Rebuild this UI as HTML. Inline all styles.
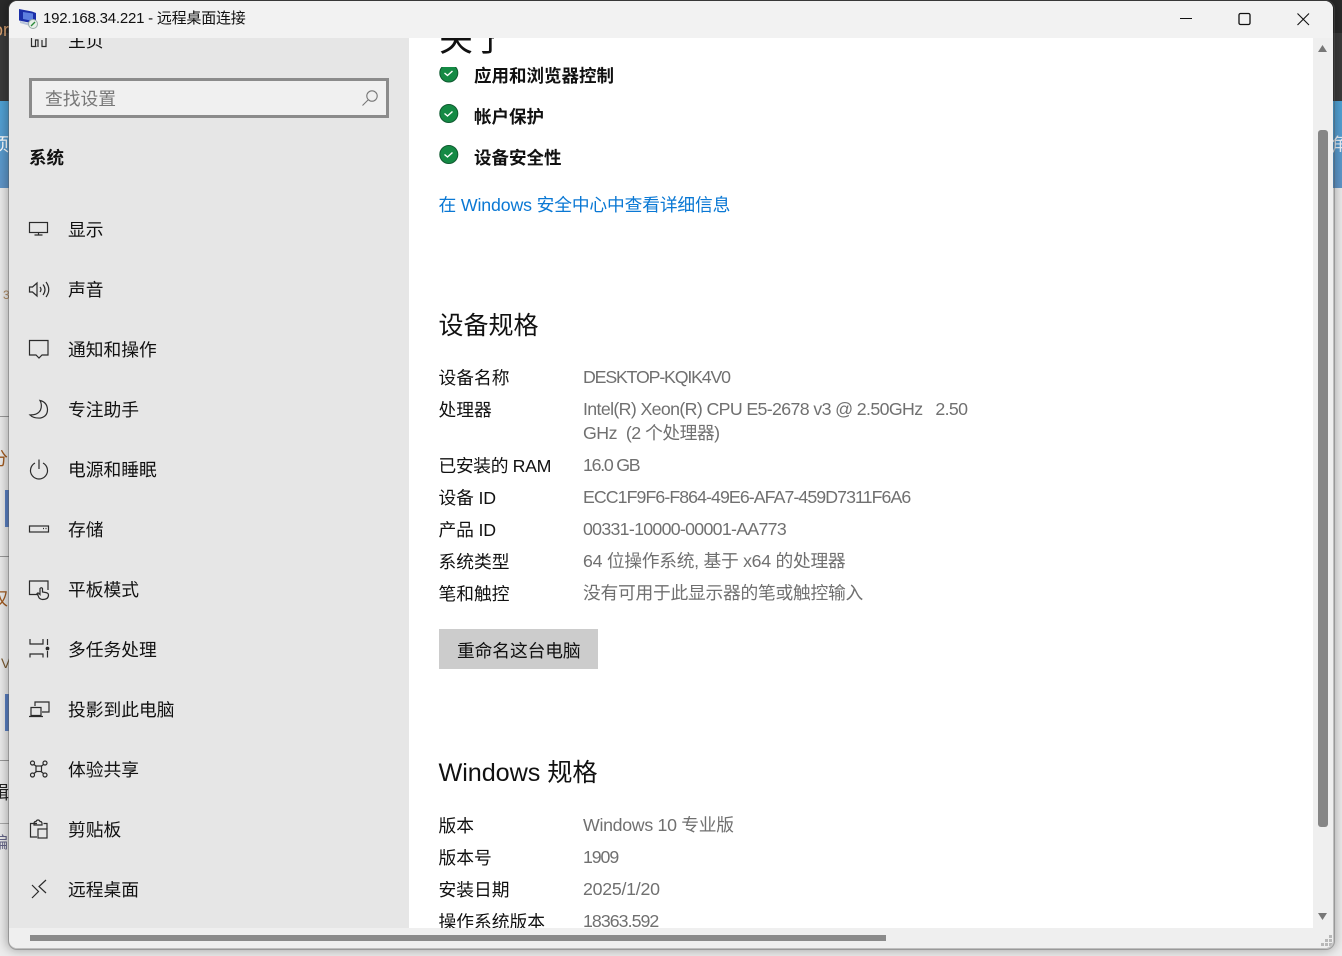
<!DOCTYPE html>
<html lang="zh-CN"><head><meta charset="utf-8"><title>关于</title>
<style>
html,body{margin:0;padding:0;width:1342px;height:956px;overflow:hidden;background:#e4e4e4}
body{position:relative;font-family:"Liberation Sans","Noto Sans CJK SC",sans-serif}
.a{position:absolute}
.t{position:absolute;white-space:nowrap;line-height:24px;height:24px;font-size:17.75px;color:#111;font-weight:400}
.v{color:#707070}
.n{left:68px}
.l{left:438.500px}
.r{left:583px}
.b{left:474px;font-weight:700;font-size:17.5px;color:#111}
svg{position:absolute;overflow:visible}
.i{fill:none;stroke:#2b2b2b;stroke-width:1.2}
#win{position:absolute;left:0;top:0;width:1342px;height:956px;clip-path:inset(1px 9px 8px 9px round 8px);background:#efefef}
</style></head><body>
<!-- background desktop -->
<div class="a" style="left:0;top:0;width:1342px;height:33px;background:#2a2a2a"></div>
<div class="a" style="left:0;top:33px;width:1342px;height:68px;background:#3a3a3a"></div>
<div class="a" style="left:0;top:101px;width:1342px;height:87px;background:linear-gradient(#4fa3d6,#6095c8)"></div>
<div class="a" style="left:0;top:188px;width:1342px;height:768px;background:#ececec"></div>
<div class="a" style="left:0;top:416px;width:9px;height:1px;background:#999"></div>
<div class="a" style="left:0;top:556px;width:9px;height:1px;background:#999"></div>
<div class="a" style="left:0;top:760px;width:9px;height:1px;background:#999"></div>
<div class="a" style="left:0;top:823px;width:9px;height:1px;background:#aaa"></div>
<div class="a" style="left:5px;top:490px;width:4px;height:37px;background:#5a80c4"></div>
<div class="a" style="left:5px;top:694px;width:4px;height:37px;background:#5a80c4"></div>
<div class="t" style="left:-7px;top:18px;color:#d8a070;font-size:18px">or</div>
<div class="t" style="left:-9px;top:133px;color:#fff;font-size:18px">项</div>
<div class="t" style="left:1331px;top:133px;color:#e8f0f8;font-size:18px">角</div>
<div class="t" style="left:3px;top:283px;color:#b08a60;font-size:12px">3</div>
<div class="t" style="left:-10px;top:447px;color:#a05a20;font-size:18px">分</div>
<div class="t" style="left:-10px;top:587px;color:#a05a20;font-size:18px">权</div>
<div class="t" style="left:1px;top:651px;color:#7a5a30;font-size:14px">V</div>
<div class="t" style="left:-9px;top:781px;color:#222;font-size:18px">辑</div>
<div class="t" style="left:-8px;top:832px;color:#668;font-size:16px">编</div>
<!-- window shadow -->
<div class="a" style="left:9px;top:1px;width:1324px;height:947px;border-radius:8px;box-shadow:0 0 10px 3px rgba(0,0,0,.28)"></div>
<div id="win">
<!-- sidebar & content -->
<div class="a" style="left:9px;top:38px;width:400px;height:890px;background:#e6e6e6"></div>
<div class="a" style="left:409px;top:38px;width:904px;height:890px;background:#fff"></div>
<!-- content, clipped -->
<div class="a" style="left:0;top:0;width:1342px;height:928px;overflow:hidden">
<div class="t" style="left:68px;top:29px;">主页</div>
<svg style="left:0;top:0" width="60" height="60"><path class="i" d="M31.5 47V38M35.5 47V40h2.500v7M42 47v-7M46 47V38M31.5 46.500h5M41.500 46.500h5"/></svg>
<div class="a" style="left:29px;top:78px;width:354px;height:34px;border:3px solid #8b8b8b;background:#f0f0f0"></div>
<div class="t v" style="left:45px;top:87px;color:#777">查找设置</div>
<svg style="left:0;top:0" width="400" height="120"><circle cx="372" cy="96" r="5.200" fill="none" stroke="#777" stroke-width="1.100"/><path d="M368 100l-5.500 5.500" stroke="#777" stroke-width="1.100"/></svg>
<div class="t" style="left:29px;top:146px;font-weight:700;font-size:17.500px">系统</div>

<div class="t n" style="top:218px">显示</div>
<div class="t n" style="top:278px">声音</div>
<div class="t n" style="top:338px">通知和操作</div>
<div class="t n" style="top:398px">专注助手</div>
<div class="t n" style="top:458px">电源和睡眠</div>
<div class="t n" style="top:518px">存储</div>
<div class="t n" style="top:578px">平板模式</div>
<div class="t n" style="top:638px">多任务处理</div>
<div class="t n" style="top:698px">投影到此电脑</div>
<div class="t n" style="top:758px">体验共享</div>
<div class="t n" style="top:818px">剪贴板</div>
<div class="t n" style="top:878px">远程桌面</div>

<svg style="left:0;top:0" width="60" height="928">
<g class="i">
<rect x="29.500" y="222.500" width="18" height="10"/><path d="M38.500 232.500v2.500M34.500 235h8"/>
<path d="M29.500 287v5h3l4.500 4v-13l-4.500 4zM40 287q2 2.500 0 5M43 284.500q4 5 0 10.500M46 282q5.500 7.500 0 15"/>
<path d="M29.500 340.500h18.500v14.500h-6l-3 3-3-3h-6.500z"/>
<path d="M40 400.500q7 1.500 7.500 9 0 7-7 8.500-7 .5-10.500-3 8 0 10.500-5 2-5-.5-9.500z"/>
<path d="M39 459.500v9.500M35 463a8.500 8.500 0 1 0 8 0"/>
<rect x="29.500" y="526" width="19" height="6"/><path d="M43 528.500h1M45.500 528.500h1"/>
<path d="M48 590v-9H29.500v13.500h9"/><path d="M42.500 599.500q-3.500-.5-4-3l-1.500-3q1-1 2 0l1 1v-6q1.500-1.500 2.500 0v3.500l3 .5q3 .5 3 2.500 0 4.500-6 4.500z"/>
<path d="M30 639v5h13v-5M30 657.500V654h13v3.500M47.500 639v6M47.500 651v6.500"/>
<circle cx="47.500" cy="648.500" r="1.300" fill="#2b2b2b"/>
<path d="M35 706v-4h14v10h-7"/><path d="M31 707.500h10v8H31zM29 716.500h14"/>
<circle cx="32.500" cy="763" r="2"/><circle cx="45" cy="763" r="2"/><circle cx="32.500" cy="775" r="2"/><circle cx="45" cy="775" r="2"/><rect x="36" y="766" width="5.500" height="5.500"/><path d="M34 764.500l2.500 2M43.500 764.500l-2.500 2M34 773.500l2.500-2M43.500 773.500l-2.500-2"/>
<path d="M37 823.500h-6.500v13.500h6.500M47 829v-5.500h-3.500M34 823.500q0-2 2-2 .5-1.500 2-1.500t2 1.500q2 0 2 2v1.500h-8z"/><rect x="38" y="829" width="9" height="9"/>
<path d="M32 885l6.500 6.500-6.500 6.500M46 880l-7 6.500 7 6.500"/>
</g></svg>

<!-- right pane -->
<div class="t" style="left:439px;top:22px;font-size:34px;line-height:36px;height:36px;font-weight:400">关于</div>
<div class="a" style="left:473px;top:38px;width:16px;height:10px;background:#fff"></div>
<div class="a" style="left:494px;top:38px;width:20px;height:18px;background:#fff"></div>
<div class="a" style="left:410px;top:55px;width:300px;height:12px;background:#fff"></div>
<svg style="left:0;top:0" width="460" height="170">
<defs><clipPath id="c1"><rect x="430" y="67" width="40" height="30"/></clipPath></defs>
<g clip-path="url(#c1)"><circle cx="448.800" cy="73" r="9" fill="#148a44" stroke="#0f5a30"/><path d="M444.500 73l3 2.500 5-4.500" fill="none" stroke="#fff" stroke-width="1.400"/></g>
<circle cx="448.800" cy="113.500" r="9" fill="#148a44" stroke="#0f5a30"/><path d="M444.500 113.500l3 2.500 5-4.500" fill="none" stroke="#fff" stroke-width="1.400"/>
<circle cx="448.800" cy="154.500" r="9" fill="#148a44" stroke="#0f5a30"/><path d="M444.500 154.500l3 2.500 5-4.500" fill="none" stroke="#fff" stroke-width="1.400"/>
</svg>
<div class="t b" style="top:64px">应用和浏览器控制</div>
<div class="t b" style="top:105px">帐户保护</div>
<div class="t b" style="top:146px">设备安全性</div>
<div class="t l" style="top:193px;color:#0a78d4;letter-spacing:-.15px">在 Windows 安全中心中查看详细信息</div>

<div class="t l" style="top:314px;font-size:25px">设备规格</div>
<div class="t l" style="top:366px">设备名称</div>
<div class="t l" style="top:398px">处理器</div>
<div class="t l" style="top:454px;letter-spacing:-.35px">已安装的 RAM</div>
<div class="t l" style="top:486px;letter-spacing:-.15px">设备 ID</div>
<div class="t l" style="top:518px;letter-spacing:-.15px">产品 ID</div>
<div class="t l" style="top:550px">系统类型</div>
<div class="t l" style="top:582px">笔和触控</div>
<div class="t r v" style="top:365px;letter-spacing:-1.170px">DESKTOP-KQIK4V0</div>
<div class="t r v" style="top:397px;letter-spacing:-.63px;white-space:pre">Intel(R) Xeon(R) CPU E5-2678 v3 @ 2.50GHz   2.50</div>
<div class="t r v" style="top:421px;letter-spacing:-.5px;white-space:pre">GHz  (2 个处理器)</div>
<div class="t r v" style="top:453px;letter-spacing:-1.250px">16.0 GB</div>
<div class="t r v" style="top:485px;letter-spacing:-.93px">ECC1F9F6-F864-49E6-AFA7-459D7311F6A6</div>
<div class="t r v" style="top:517px;letter-spacing:-.7px">00331-10000-00001-AA773</div>
<div class="t r v" style="top:549px;letter-spacing:-.28px">64 位操作系统, 基于 x64 的处理器</div>
<div class="t r v" style="top:581px;letter-spacing:-.25px">没有可用于此显示器的笔或触控输入</div>
<div class="a" style="left:439px;top:629px;width:159px;height:40px;background:#ccc"></div>
<div class="t" style="left:457px;top:639px;letter-spacing:-.1px">重命名这台电脑</div>
<div class="t l" style="top:761px;font-size:25.200px;letter-spacing:-.05px">Windows 规格</div>
<div class="t l" style="top:814px">版本</div>
<div class="t l" style="top:846px">版本号</div>
<div class="t l" style="top:878px">安装日期</div>
<div class="t l" style="top:910px">操作系统版本</div>
<div class="t r v" style="top:813px;letter-spacing:-.3px">Windows 10 专业版</div>
<div class="t r v" style="top:845px;letter-spacing:-1.100px">1909</div>
<div class="t r v" style="top:877px;letter-spacing:-.25px">2025/1/20</div>
<div class="t r v" style="top:909px;letter-spacing:-.95px">18363.592</div>
</div>
<!-- title bar -->
<div class="a" style="left:9px;top:1px;width:1324px;height:37px;background:#f2f2f2"></div>
<svg style="left:0;top:0" width="50" height="40">
<path d="M19 9l13 2.500 4 1.500v11l-17-3.500z" fill="#1b2fa8"/><path d="M23 12l10 1.500v7.500l-10-2z" fill="#5d7fe0"/><path d="M20 21l12 3 3 1.500-3 1-12-3.500z" fill="#b7c4da"/><circle cx="33" cy="24" r="4.500" fill="#e8efe8" stroke="#9aa"/><path d="M31 26l4-4" stroke="#2a8a3a" stroke-width="1.300"/>
</svg>
<div class="t" style="left:43px;top:7px;font-size:15px;font-weight:400;letter-spacing:-.22px;color:#111">192.168.34.221 - 远程桌面连接</div>
<svg style="left:1170px;top:0" width="160" height="38" fill="none" stroke="#111">
<path d="M10 18.500h12" stroke-width="1"/>
<rect x="69" y="13.500" width="11" height="11" rx="1.500" stroke-width="1.300"/>
<path d="M127.500 13.500l11.500 11.500M139 13.500l-11.500 11.500" stroke-width="1.100"/>
</svg>
<!-- scrollbars -->
<svg style="left:1313px;top:38px" width="20" height="20"><path d="M9.500 7l4.500 7H5z" fill="#777"/></svg>
<div class="a" style="left:1318px;top:130px;width:10px;height:697px;background:#868686;border-radius:3px"></div>
<svg style="left:1313px;top:908px" width="20" height="20"><path d="M5 5h9l-4.500 7z" fill="#777"/></svg>
<div class="a" style="left:30px;top:935px;width:856px;height:6px;background:#8a8a8a"></div>
<svg style="left:1318px;top:932px" width="16" height="16" fill="#b8b8b8"><rect x="11" y="3" width="3" height="3"/><rect x="7" y="7" width="3" height="3"/><rect x="11" y="7" width="3" height="3"/><rect x="3" y="11" width="3" height="3"/><rect x="7" y="11" width="3" height="3"/><rect x="11" y="11" width="3" height="3"/></svg>
</div>
<!-- window edge -->
<div class="a" style="left:8px;top:0;width:1325px;height:948px;box-sizing:content-box;border-radius:9px;border:1px solid rgba(90,90,90,.4);pointer-events:none"></div>
</body></html>
